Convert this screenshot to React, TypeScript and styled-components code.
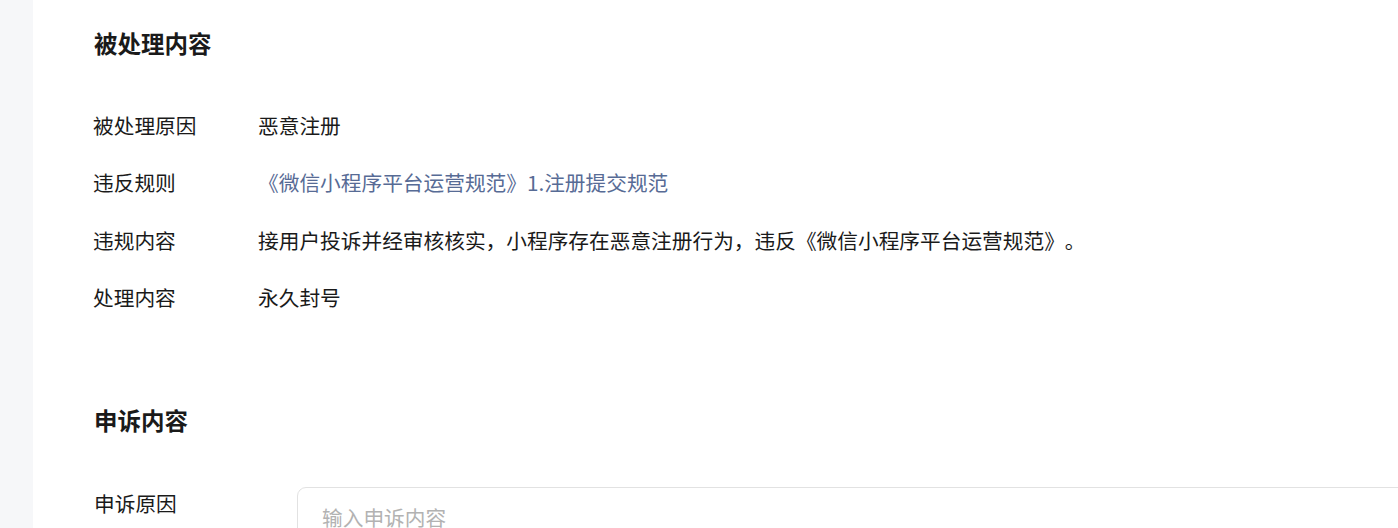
import styled, { createGlobalStyle } from 'styled-components';

const GlobalStyle = createGlobalStyle`
  body {
    margin: 0;
    background: #ffffff;
    font-family: "Noto Sans CJK SC", "Noto Sans", sans-serif;
    color: #1a1a1a;
    text-spacing-trim: space-all;
  }
`;

const infoRows = [
  { label: '被处理原因', value: '恶意注册' },
  { label: '违反规则', value: '《微信小程序平台运营规范》1.注册提交规范', link: true },
  {
    label: '违规内容',
    value: '接用户投诉并经审核核实，小程序存在恶意注册行为，违反《微信小程序平台运营规范》。',
  },
  { label: '处理内容', value: '永久封号' },
];

const App = () => {
  return (
    <>
      <GlobalStyle />
      <Page>
        <Sidebar />
        <Main>
          <SectionTitle>被处理内容</SectionTitle>
          <InfoList>
            {infoRows.map((row) => (
              <InfoRow key={row.label}>
                <Label>{row.label}</Label>
                <Value link={row.link}>{row.value}</Value>
              </InfoRow>
            ))}
          </InfoList>

          <SectionTitle>申诉内容</SectionTitle>
          <FormRow>
            <FormLabel>申诉原因</FormLabel>
            <TextArea placeholder="输入申诉内容" />
          </FormRow>
        </Main>
      </Page>
    </>
  );
};

export default App;

const Page = styled.div`
  display: flex;
  width: 100%;
  height: 528px;
  overflow: hidden;
`;

const Sidebar = styled.div`
  width: 33px;
  flex-shrink: 0;
  background-color: #f6f7f9;
`;

const Main = styled.main`
  flex: 1;
  display: flex;
  flex-direction: column;
  padding: 27px 0 0 61px;
  box-sizing: border-box;
  min-width: 0;
`;

const SectionTitle = styled.h2`
  margin: 0;
  height: 32px;
  font-size: 23.5px;
  font-weight: 700;
  line-height: 32px;
  color: #1a1a1a;
  white-space: nowrap;
`;

const InfoList = styled.div`
  display: flex;
  flex-direction: column;
  margin: 37px 0 78px -1px;
`;

const InfoRow = styled.div`
  display: flex;
  align-items: center;
  height: 57.5px;
  font-size: 20.7px;
  white-space: nowrap;
`;

const Label = styled.span`
  width: 165px;
  flex-shrink: 0;
  color: #1a1a1a;
`;

const Value = styled.span.withConfig({
  shouldForwardProp: (prop) => prop !== 'link',
})<{ link?: boolean }>`
  color: ${(props) => (props.link ? '#576b95' : '#1a1a1a')};
  cursor: ${(props) => (props.link ? 'pointer' : 'default')};
`;

const FormRow = styled.div`
  display: flex;
  align-items: flex-start;
  margin-top: 51px;
`;

const FormLabel = styled.span`
  width: 203px;
  flex-shrink: 0;
  font-size: 20.7px;
  line-height: 32px;
  color: #1a1a1a;
  white-space: nowrap;
`;

const TextArea = styled.textarea`
  flex: 1;
  height: 160px;
  margin-right: -20px;
  padding: 14px 24px;
  box-sizing: border-box;
  border: 1px solid #e2e2e2;
  border-radius: 9px;
  font-family: "Noto Sans CJK SC", "Noto Sans", sans-serif;
  font-size: 20.7px;
  line-height: 30px;
  color: #1a1a1a;
  resize: none;
  outline: none;

  &::placeholder {
    color: #b2b2b2;
  }
`;
